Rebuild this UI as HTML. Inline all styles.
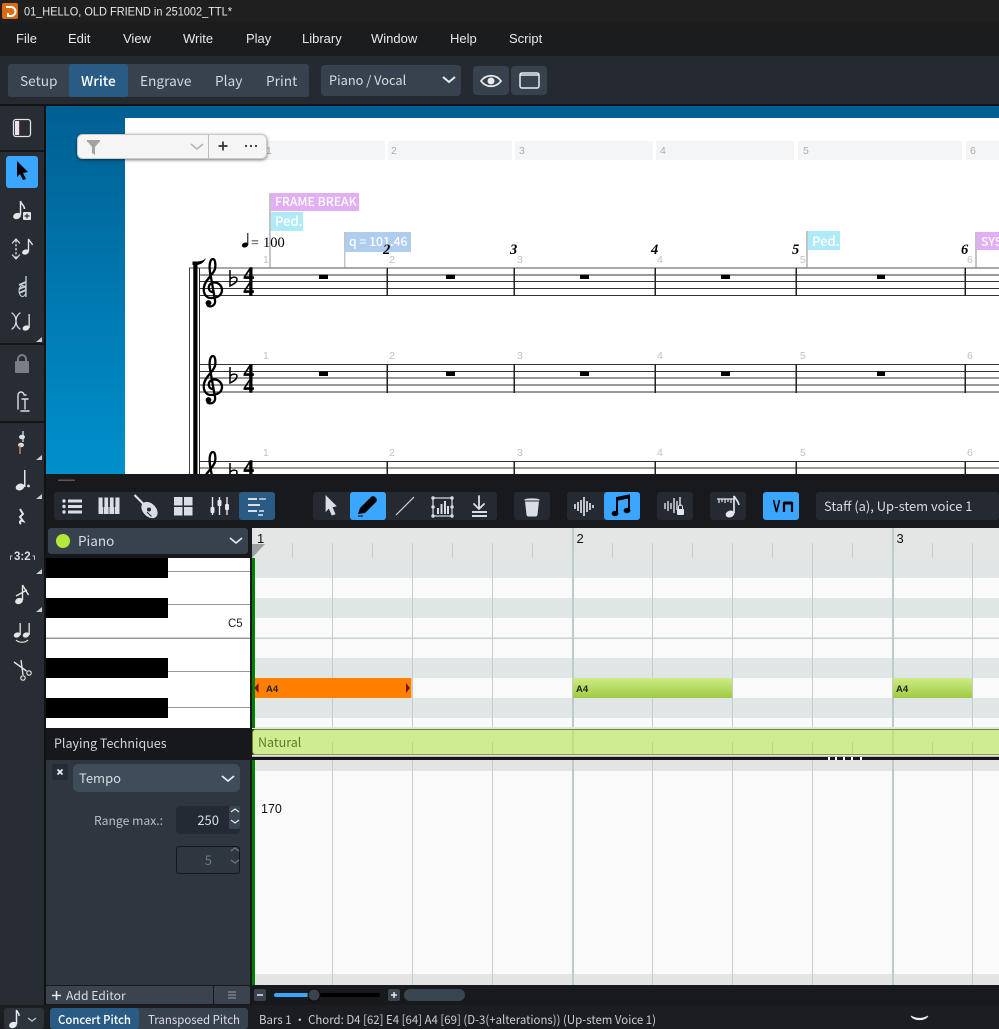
<!DOCTYPE html>
<html><head><meta charset="utf-8"><title>Dorico</title>
<style>
html,body{margin:0;padding:0;background:#17191c;width:999px;height:1029px;overflow:hidden}
svg{display:block;position:absolute;left:0;top:0}
text{font-family:"Noto Sans CJK SC","Liberation Sans",sans-serif;fill:#d8dde2;font-size:14px}
.m{font-family:"Liberation Sans",sans-serif;font-size:13px;fill:#e8e8e8}
.t{font-size:13.7px;fill:#d2d8de}
.n{font-size:10.5px;fill:#b8c3d2;font-family:"Liberation Sans",sans-serif}
.r{font-size:10.5px;fill:#a9adb3;font-family:"Liberation Sans",sans-serif}
.b{font-family:"Liberation Serif",serif;font-weight:bold;font-style:italic;font-size:14.5px;fill:#000}
.tag{font-size:12.2px;fill:#fff;font-weight:500}
.ts{font-family:"Liberation Serif",serif;font-weight:bold;font-size:21px;fill:#000;stroke:#000;stroke-width:.5px}
.ic{fill:none;stroke:#d9dee4;stroke-width:1.6;stroke-linecap:round;stroke-linejoin:round}
.f{fill:#d9dee4}
.note{font-family:"Liberation Sans",sans-serif;font-weight:bold;font-size:9.5px;fill:#222}
</style></head><body>
<svg width="999" height="1029" viewBox="0 0 999 1029" xmlns="http://www.w3.org/2000/svg">
<defs>
<linearGradient id="blue" x1="0" y1="0" x2="0" y2="1"><stop offset="0" stop-color="#005f92"/><stop offset="1" stop-color="#0090cc"/></linearGradient>
<linearGradient id="gn" x1="0" y1="0" x2="0" y2="1"><stop offset="0" stop-color="#cdea84"/><stop offset="1" stop-color="#9fcb42"/></linearGradient>
<filter id="sh" x="-10%" y="-30%" width="120%" height="170%"><feDropShadow dx="0" dy="1" stdDeviation="1.6" flood-color="#000" flood-opacity=".55"/></filter>
<g id="clef"><path d="M213 292C208 292 207 285 212 283C218 281 222 286 222 290C222 296 216 298 211 298C205 298 203 292 204 287C205 280 213 275 215 269C216 264 215 259 213 259C210 259 209 265 210 272L215 300C216 306 210 308 207 305" fill="none" stroke="#000" stroke-width="2.300"/><circle cx="208.500" cy="303" r="2.900"/></g>
<g id="sys">
<use href="#clef"/>
<path d="M230 270v16c3-1.500 7-3.500 7-6.500c0-3-4-3-7-.5" fill="none" stroke="#000" stroke-width="1.500"/>
<text class="ts" x="243.500" y="281.500">4</text><text class="ts" x="243.500" y="295.500">4</text>
</g>
</defs>

<!-- title + menu -->
<rect width="999" height="22" fill="#1f1f1f"/>
<rect y="22" width="999" height="34" fill="#1b1c1e"/>
<rect x="2" y="3" width="16" height="16" rx="2" fill="#d96c12"/>
<path d="M6 7h5a4 4 0 0 1 0 9H8v-3" fill="none" stroke="#fff" stroke-width="2"/>
<text class="m" x="24" y="15.500" style="font-size:12px" textLength="208" lengthAdjust="spacingAndGlyphs">01_HELLO, OLD FRIEND in 251002_TTL*</text>
<g class="menu">
<text class="m" x="16" y="43">File</text><text class="m" x="68" y="43">Edit</text><text class="m" x="123" y="43">View</text><text class="m" x="183" y="43">Write</text><text class="m" x="246" y="43">Play</text><text class="m" x="302" y="43">Library</text><text class="m" x="371" y="43">Window</text><text class="m" x="450" y="43">Help</text><text class="m" x="509" y="43">Script</text>
</g>

<!-- main toolbar -->
<rect y="56" width="999" height="48" fill="#252a31"/>
<rect y="104" width="999" height="2" fill="#121316"/>
<rect x="8" y="64" width="301" height="33" rx="3" fill="#38424e"/>
<rect x="69" y="64" width="59" height="33" rx="3" fill="#2a5b85"/>
<text class="t" x="20" y="86">Setup</text>
<text class="t" x="81" y="86" style="fill:#fff;font-weight:500">Write</text>
<text class="t" x="140" y="86">Engrave</text>
<text class="t" x="215" y="86">Play</text>
<text class="t" x="266" y="86">Print</text>
<rect x="321" y="65" width="140" height="31" rx="4" fill="#38424e"/>
<text x="329" y="85" style="font-size:12.800px;fill:#d8dde2">Piano / Vocal</text>
<path d="M443 77l6 5 6-5" fill="none" stroke="#e8ebee" stroke-width="2"/>
<rect x="473" y="66" width="36" height="29" rx="4" fill="#38424e"/>
<rect x="511" y="66" width="36" height="29" rx="4" fill="#38424e"/>
<path d="M481 81c5-7 15-7 20 0c-5 7-15 7-20 0z" fill="none" stroke="#e8ebee" stroke-width="1.700"/><circle cx="491" cy="81" r="3.500" fill="#e8ebee"/>
<rect x="520" y="73" width="19" height="15" rx="2" fill="none" stroke="#e8ebee" stroke-width="1.500"/><path d="M520 75h19" stroke="#e8ebee" stroke-width="1.500"/>

<!-- score area -->
<rect x="46" y="106" width="953" height="368" fill="url(#blue)"/>
<rect x="125" y="118" width="874" height="356" fill="#fff"/>
<!-- bar strip -->
<g fill="#f4f5f7"><rect x="262" y="141" width="123" height="19"/><rect x="388" y="141" width="124" height="19"/><rect x="515" y="141" width="138" height="19"/><rect x="656" y="141" width="138" height="19"/><rect x="798" y="141" width="164" height="19"/><rect x="966" y="141" width="33" height="19"/></g>
<g class="stripn"><text class="r" x="266" y="154">1</text><text class="r" x="391" y="154">2</text><text class="r" x="519" y="154">3</text><text class="r" x="660" y="154">4</text><text class="r" x="803" y="154">5</text><text class="r" x="970" y="154">6</text></g>

<!-- signposts -->
<g fill="#c4c4c4"><rect x="269" y="193" width="2" height="75"/><rect x="344" y="232" width="1.500" height="36"/><rect x="806" y="231" width="2" height="37"/><rect x="975" y="232" width="2" height="36"/></g>
<rect x="271" y="193" width="88" height="18" fill="#e2aef5"/><text class="tag" x="275" y="206">FRAME BREAK</text>
<rect x="271" y="212" width="32" height="19" fill="#aeeaf8"/><text class="tag" x="275" y="226" style="font-size:13px">Ped.</text>
<rect x="345.500" y="232" width="65.500" height="20" fill="#aecdef"/><text class="tag" x="349" y="246">q = 101.46</text>
<rect x="808" y="231" width="32" height="19" fill="#aeeaf8"/><text class="tag" x="812" y="246" style="font-size:13px">Ped.</text>
<rect x="977" y="232" width="22" height="18" fill="#e2aef5"/><text class="tag" x="981" y="246">SYS</text>

<!-- metronome -->
<ellipse cx="245" cy="245" rx="3.200" ry="2.400" transform="rotate(-20 245 245)" fill="#000"/><rect x="247.300" y="233" width="1" height="12" fill="#000"/>
<text x="251" y="247" style="font-family:'Liberation Serif',serif;font-size:14px;fill:#000">=</text>
<text x="263" y="247" style="font-family:'Liberation Serif',serif;font-size:14.500px;fill:#000">100</text>

<!-- staves -->
<g stroke="#333" stroke-width="1">
<path d="M199 275H999M199 281.500H999M199 288.500H999M199 295.500H999"/>
<path d="M199 364.500H999M199 371.500H999M199 378H999M199 385H999M199 392H999"/>
<path d="M199 461.500H999M199 468H999"/>
</g>
<path d="M189 268H999" stroke="#8c8c8c" stroke-width="1.500"/>
<g fill="#222"><rect x="386.500" y="268" width="1.500" height="28"/><rect x="513.500" y="268" width="1.500" height="28"/><rect x="654.500" y="268" width="1.500" height="28"/><rect x="795.500" y="268" width="1.500" height="28"/><rect x="964.500" y="268" width="1.500" height="28"/>
<rect x="386.500" y="364" width="1.500" height="29"/><rect x="513.500" y="364" width="1.500" height="29"/><rect x="654.500" y="364" width="1.500" height="29"/><rect x="795.500" y="364" width="1.500" height="29"/><rect x="964.500" y="364" width="1.500" height="29"/>
<rect x="386.500" y="461" width="1.500" height="14"/><rect x="513.500" y="461" width="1.500" height="14"/><rect x="654.500" y="461" width="1.500" height="14"/><rect x="795.500" y="461" width="1.500" height="14"/><rect x="964.500" y="461" width="1.500" height="14"/></g>
<g fill="#000"><rect x="319" y="274.500" width="9" height="4.500"/><rect x="446" y="274.500" width="9" height="4.500"/><rect x="580" y="274.500" width="9" height="4.500"/><rect x="721" y="274.500" width="9" height="4.500"/><rect x="877" y="274.500" width="8" height="4.500"/>
<rect x="319" y="371.500" width="9" height="4.500"/><rect x="446" y="371.500" width="9" height="4.500"/><rect x="580" y="371.500" width="9" height="4.500"/><rect x="721" y="371.500" width="9" height="4.500"/><rect x="877" y="371.500" width="8" height="4.500"/></g>
<!-- system brackets -->
<rect x="189" y="268" width="1" height="206" fill="#444"/><rect x="193.300" y="262" width="4.200" height="212" fill="#000"/><rect x="199" y="268" width="1" height="206" fill="#222"/>
<path d="M192.500 261.500h4c4 0 7-1 9.500-3.500c-1 3-4 6.500-9 7h-4.500z" fill="#000"/>
<use href="#sys"/>
<use href="#sys" y="97"/>
<use href="#sys" y="193"/>
<!-- numbers -->
<g><text class="b" x="383" y="254">2</text><text class="b" x="510" y="254">3</text><text class="b" x="651" y="254">4</text><text class="b" x="792" y="254">5</text><text class="b" x="961" y="254">6</text></g>
<g><text class="n" x="263" y="263">1</text><text class="n" x="389" y="263">2</text><text class="n" x="517" y="263">3</text><text class="n" x="657" y="263">4</text><text class="n" x="800" y="263">5</text><text class="n" x="967" y="263">6</text>
<text class="n" x="263" y="359">1</text><text class="n" x="389" y="359">2</text><text class="n" x="517" y="359">3</text><text class="n" x="657" y="359">4</text><text class="n" x="800" y="359">5</text><text class="n" x="967" y="359">6</text>
<text class="n" x="263" y="456">1</text><text class="n" x="389" y="456">2</text><text class="n" x="517" y="456">3</text><text class="n" x="657" y="456">4</text><text class="n" x="800" y="456">5</text><text class="n" x="967" y="456">6</text></g>

<!-- filter popover -->
<rect x="77.500" y="134.500" width="189" height="24" rx="5" fill="#f5f5f5" stroke="#c9c9c9" filter="url(#sh)"/>
<path d="M87 141h13l-5 6v8l-3-2v-6z" fill="#a3a3a3"/><path d="M87 141h13" stroke="#a3a3a3" stroke-width="2"/>
<path d="M191 144l6 5 6-5" fill="none" stroke="#b5b5b5" stroke-width="1.600"/>
<rect x="208" y="135" width="1" height="23" fill="#bbb"/>
<path d="M223 141.500v9M218.500 146h9" stroke="#333" stroke-width="1.700"/>
<circle cx="246" cy="146" r="1.100" fill="#333"/><circle cx="251" cy="146" r="1.100" fill="#333"/><circle cx="256" cy="146" r="1.100" fill="#333"/>

<!-- left toolbar -->
<rect x="0" y="106" width="44" height="923" fill="#282c33"/>
<rect x="44" y="106" width="2" height="923" fill="#111214"/>
<rect x="0" y="150" width="44" height="2" fill="#141518"/>
<rect x="0" y="343" width="44" height="2" fill="#141518"/>
<rect x="0" y="421" width="44" height="2" fill="#141518"/>
<rect x="13.500" y="119.500" width="17" height="17" rx="2.500" fill="none" stroke="#e0e3e6" stroke-width="1.300"/><rect x="15" y="121" width="4" height="14" fill="#e4e7ea"/><rect x="19" y="121" width="1" height="14" fill="#7a3a3a"/>
<rect x="6" y="156" width="32" height="32" rx="3" fill="#3aa6ff"/>
<path d="M17 161l11 11-5 1 3 6-3 1-3-6-3 3z" fill="#000"/>
<!-- note + -->
<ellipse cx="17" cy="216" rx="4" ry="3" fill="#e2e6ea" transform="rotate(-20 17 216)"/><path d="M20.500 215v-14c1 4 4 4 4 8" fill="none" stroke="#e2e6ea" stroke-width="1.500"/><rect x="23" y="212" width="8" height="8" rx="1" fill="#e2e6ea"/><path d="M27 213.500v5M24.500 216h5" stroke="#282c33" stroke-width="1.200"/>
<!-- arrows note -->
<path d="M16 240v18" stroke="#d9dee4" stroke-width="1.300" stroke-dasharray="2.500 1.500"/><path d="M12.500 243l3.500-4 3.500 4M12.500 255l3.500 4 3.500-4" class="ic" style="stroke-width:1.300"/>
<ellipse cx="25.500" cy="252" rx="3.500" ry="2.500" fill="#e2e6ea" transform="rotate(-20 25.500 252)"/><path d="M28.500 251v-12c1 3 3 3 4 6" fill="none" stroke="#e2e6ea" stroke-width="1.400"/>
<!-- tremolo -->
<path d="M26 276v21" stroke="#c9d2da" stroke-width="1.300"/><path d="M19 285l7-3M19 289l7-3M19 293l7-3" stroke="#c9d2da" stroke-width="1.800"/><ellipse cx="22.500" cy="291" rx="3.500" ry="5.500" fill="none" stroke="#c9d2da"/>
<!-- stem ties -->
<path d="M12 313c3 2 4 5 4 8c0 3-1 6-4 8M20 313c-3 2-4 5-4 8c0 3 1 6 4 8" class="ic" style="stroke-width:1.300"/>
<ellipse cx="26" cy="328" rx="3.500" ry="2.500" fill="#e2e6ea" transform="rotate(-20 26 328)"/><rect x="28.500" y="314" width="1.300" height="14" fill="#e2e6ea"/>
<path d="M36 343l6-5v5z" fill="#c8ccd0" transform="translate(0 -1)"/>
<!-- lock -->
<rect x="15" y="361" width="14" height="12" rx="1" fill="#7b7f85"/><path d="M18 361v-2a4 4 0 0 1 8 0v2" fill="none" stroke="#7b7f85" stroke-width="2"/>
<!-- caret -->
<path d="M18 400v-5a3 3 0 0 1 6 0h2M18 400v9M22 399h6M25 399v10M21 411h8" class="ic" style="stroke-width:1.400"/>
<!-- rests/notes -->
<path d="M23 431v11" stroke="#d9dee4" stroke-width="1.300"/><ellipse cx="22" cy="437" rx="3" ry="2.300" fill="#d9dee4"/><ellipse cx="21" cy="445" rx="3" ry="2.300" fill="#d9dee4"/><path d="M20 445v9" stroke="#d8955a" stroke-width="1.300"/>
<path d="M36 460l6-5v5zM36 499l6-5v5zM36 574l6-5v5zM36 612l6-5v5z" fill="#c8ccd0"/>
<ellipse cx="20" cy="487" rx="4.500" ry="3.300" fill="#e2e6ea" transform="rotate(-20 20 487)"/><rect x="24" y="470" width="1.500" height="17" fill="#e2e6ea"/><circle cx="28.500" cy="486" r="1.400" fill="#e2e6ea"/>
<path d="M20 509l3 5-3 3 3 4c-3-1-4 1-2 3" fill="none" stroke="#dbe2e8" stroke-width="2"/>
<text x="14" y="560" style="font-family:'Liberation Sans',sans-serif;font-size:11.500px;font-weight:bold;fill:#d9dee4">3:2</text><path d="M10.500 560v-4h2M34.500 560v-4h-2" stroke="#b9c0c6" fill="none"/>
<ellipse cx="19" cy="601" rx="4" ry="3" fill="#e2e6ea" transform="rotate(-20 19 601)"/><path d="M22.500 600v-15M16 596l11-6M22.500 585l6 10" fill="none" stroke="#e2e6ea" stroke-width="1.400"/>
<ellipse cx="17" cy="635" rx="3.300" ry="2.500" fill="#e2e6ea" transform="rotate(-20 17 635)"/><rect x="19.500" y="623" width="1.300" height="12" fill="#e2e6ea"/><ellipse cx="26" cy="635" rx="3.300" ry="2.500" fill="#e2e6ea" transform="rotate(-20 26 635)"/><rect x="28.500" y="623" width="1.300" height="12" fill="#e2e6ea"/><path d="M16 640c3 3 9 3 12 0" fill="none" stroke="#e2e6ea" stroke-width="1.200"/>
<path d="M14 662L26.500 671M21 660L23 675" fill="none" stroke="#dfe3e7" stroke-width="1.400"/><circle cx="29" cy="673" r="2.200" fill="none" stroke="#dfe3e7" stroke-width="1.200"/><circle cx="23" cy="678" r="2.200" fill="none" stroke="#dfe3e7" stroke-width="1.200"/>

<!-- lower zone header -->
<rect x="46" y="474" width="953" height="54" fill="#17191c"/>
<rect x="58" y="479.500" width="17" height="1.500" fill="#55585c"/>
<rect x="54" y="492" width="221" height="28" rx="3" fill="#252a32"/>
<rect x="239" y="492" width="36" height="28" rx="3" fill="#2a5b85"/>
<rect x="313" y="492" width="184" height="28" rx="3" fill="#252a32"/>
<rect x="350" y="492" width="36" height="28" rx="3" fill="#3aa6ff"/>
<rect x="514" y="492" width="36" height="28" rx="3" fill="#252a32"/>
<rect x="567" y="492" width="73" height="28" rx="3" fill="#252a32"/>
<rect x="604" y="492" width="36" height="28" rx="3" fill="#3aa6ff"/>
<rect x="657" y="492" width="36" height="28" rx="3" fill="#252a32"/>
<rect x="710" y="492" width="36" height="28" rx="3" fill="#252a32"/>
<rect x="763" y="492" width="36" height="28" rx="3" fill="#3aa6ff"/>
<rect x="816" y="492" width="183" height="28" rx="3" fill="#252a32"/>
<text x="824" y="511" style="font-size:12.900px;fill:#d8dde2">Staff (a), Up-stem voice 1</text>
<!-- list -->
<g class="f"><circle cx="64" cy="501" r="1.700"/><circle cx="64" cy="506.500" r="1.700"/><circle cx="64" cy="512" r="1.700"/><rect x="68" y="499.500" width="14" height="3"/><rect x="68" y="505" width="14" height="3"/><rect x="68" y="510.500" width="14" height="3"/></g>
<!-- keys -->
<rect x="98.500" y="497.500" width="21" height="16.500" class="f"/>
<path d="M103.500 497v10M109 497v10M114.500 497v10" stroke="#252a32" stroke-width="1.800"/><path d="M103.500 507v7M109 507v7M114.500 507v7" stroke="#252a32" stroke-width=".7"/>
<!-- guitar -->
<path d="M134.500 495L144 504.500" stroke="#e2e6ea" stroke-width="2"/>
<ellipse cx="149.500" cy="510" rx="9.500" ry="6.500" transform="rotate(45 149.500 510)" class="f"/><circle cx="149" cy="509.500" r="2" fill="#252a32"/><path d="M147 512l4.500 4.500" stroke="#252a32"/>
<!-- grid -->
<g class="f"><rect x="174" y="497" width="8.500" height="8.500"/><rect x="184" y="497" width="8.500" height="8.500"/><rect x="174" y="507" width="8.500" height="8.500"/><rect x="184" y="507" width="8.500" height="8.500"/></g>
<!-- mixer -->
<path d="M212.500 497v18M219.500 497v18M227 497v18" stroke="#e2e6ea" stroke-width="1.400"/><rect x="210.500" y="507" width="4" height="6" rx="1" fill="#e2e6ea"/><rect x="217.500" y="500" width="4" height="6" rx="1" fill="#e2e6ea"/><rect x="225" y="504" width="4" height="6" rx="1" fill="#e2e6ea"/>
<!-- roll -->
<g class="f"><rect x="248" y="498" width="9" height="2"/><rect x="248" y="504" width="12" height="2"/><rect x="248" y="510" width="9" height="2"/><rect x="259" y="498" width="7" height="2" opacity=".7"/><rect x="259" y="510" width="5" height="2" opacity=".8"/><rect x="258" y="514" width="5" height="2" opacity=".8"/></g>
<!-- select -->
<path d="M326 496l10 10-4 1 3 7-3 1-3-7-3 3z" class="f" stroke="#d9dee4" stroke-width=".8"/>
<!-- pencil -->
<path d="M358 514l2-6 11-11c1-1 3-1 4 0l1 1c1 1 1 3 0 4l-11 11z" fill="#000"/><path d="M358 516h5" stroke="#000"/>
<path d="M396 515l18-18" stroke="#cfd4d9" stroke-width="1.200"/>
<!-- range -->
<rect x="433" y="498" width="19" height="18" fill="none" stroke="#d9dee4" stroke-width="1.200"/><g class="f"><circle cx="433" cy="498" r="1.700"/><circle cx="452" cy="498" r="1.700"/><circle cx="433" cy="516" r="1.700"/><circle cx="452" cy="516" r="1.700"/><circle cx="433" cy="507" r="1.700"/><circle cx="452" cy="507" r="1.700"/><rect x="437" y="508" width="2" height="6"/><rect x="440.500" y="504" width="2" height="10"/><rect x="444" y="501" width="2" height="13"/><rect x="447" y="506" width="2" height="8"/></g>
<!-- down -->
<path d="M479 496v12M474 504l5 5 5-5" class="ic" style="stroke-width:1.800"/><rect x="472" y="511" width="15" height="2" class="f"/><rect x="472" y="515" width="15" height="2" class="f"/>
<!-- trash -->
<path d="M525 501.500h14l-1.500 13c-.2 1.500-1 2-2 2h-7c-1 0-1.800-.5-2-2z" class="f"/><path d="M524.500 499.500c2-1.500 13-1.500 15 0v1h-15z" class="f"/>
<!-- wave -->
<path d="M575 504v5M578 502v9M581 500v13M584 497v19M587 501v11M590 503v7M593 505v3" stroke="#d9dee4" stroke-width="1.700"/>
<!-- notes blue -->
<path d="M617 498l12-2.500v15" fill="none" stroke="#000" stroke-width="2"/><path d="M617 497v16" stroke="#000" stroke-width="2"/><path d="M617 499l12-2.500" stroke="#000" stroke-width="3.500"/><ellipse cx="615" cy="513.500" rx="3.400" ry="2.700" fill="#000"/><ellipse cx="627" cy="510.500" rx="3.400" ry="2.700" fill="#000"/>
<!-- wave lock -->
<path d="M665 503v6M668 501v10M671 503v6M674 498v15M677 501v9M680 497v9" stroke="#cfd6dc" stroke-width="1.500"/><rect x="677" y="509" width="7" height="6" rx="1" fill="#e2e6ea"/><path d="M678.500 509v-2a2 2 0 0 1 4 0v2" fill="none" stroke="#e2e6ea"/>
<!-- ruler note -->
<path d="M717 499h16M719 499v4M722 499v3M725 499v4M728 499v3M731 499v4" stroke="#e2e6ea" stroke-width="1.200" fill="none"/>
<ellipse cx="730" cy="514" rx="4.500" ry="3.300" fill="#e2e6ea" transform="rotate(-20 730 514)"/><path d="M734 513v-17c2 4 4 4 5 9" fill="none" stroke="#e2e6ea" stroke-width="1.700"/>
<!-- down-up bow -->
<path d="M773.500 500l3 12 3-12" fill="none" stroke="#000" stroke-width="1.600"/><path d="M784 512v-9h8v9" fill="none" stroke="#000" stroke-width="2.200"/><path d="M784 503h8" stroke="#000" stroke-width="3"/>

<!-- Piano dropdown -->
<rect x="48" y="528" width="200" height="26" rx="3" fill="#38424e"/>
<circle cx="63" cy="541" r="7" fill="#b2e83a"/>
<text x="78" y="546" style="font-size:13.500px;fill:#d8dde2">Piano</text>
<path d="M230 538l6 5 6-5" fill="none" stroke="#e8ebee" stroke-width="1.600"/>

<!-- piano keyboard -->
<rect x="46" y="558" width="204" height="170" fill="#fff"/>
<g fill="#000"><rect x="46" y="558" width="122" height="20"/><rect x="46" y="598" width="122" height="20"/><rect x="46" y="658" width="122" height="20"/><rect x="46" y="698" width="122" height="20"/></g>
<g fill="#999"><rect x="168" y="571" width="82" height="1"/><rect x="168" y="604" width="82" height="1"/><rect x="46" y="637.500" width="204" height="1.500"/><rect x="168" y="671" width="82" height="1"/><rect x="168" y="707" width="82" height="1"/></g>
<text x="228" y="627" style="font-family:'Liberation Sans',sans-serif;font-size:11.500px;fill:#222">C5</text>
<rect x="250" y="528" width="2" height="232" fill="#17191c"/>

<!-- ruler -->
<rect x="252" y="528" width="747" height="30" fill="#e4e5e5"/>
<!-- rows -->
<rect x="252" y="558" width="747" height="170" fill="#fafafa"/>
<g fill="#e0e5e5"><rect x="252" y="558" width="747" height="20"/><rect x="252" y="598" width="747" height="20"/><rect x="252" y="658" width="747" height="20"/><rect x="252" y="698" width="747" height="20"/></g>
<rect x="252" y="637.500" width="747" height="1.500" fill="#ccd2d2"/>
<rect x="252" y="727" width="747" height="2" fill="#e4e5e5"/>
<!-- tempo lane -->
<rect x="252" y="760" width="747" height="225" fill="#fafafa"/>
<rect x="252" y="760" width="747" height="11" fill="#e4e4e4"/>
<rect x="252" y="974" width="747" height="11" fill="#e4e4e4"/>
<!-- grid -->
<g stroke="#c3cdcd" stroke-width="1"><path d="M332.500 558V727M412.500 558V727M492.500 558V727M652.500 558V727M732.500 558V727M812.500 558V727M972.500 558V727"/>
<path d="M332.500 760V985M412.500 760V985M492.500 760V985M652.500 760V985M732.500 760V985M812.500 760V985M972.500 760V985"/>
<path d="M292.500 543V558M332.500 543V558M372.500 543V558M412.500 543V558M452.500 543V558M492.500 543V558M532.500 543V558M612.500 543V558M652.500 543V558M692.500 543V558M732.500 543V558M772.500 543V558M812.500 543V558M852.500 543V558M932.500 543V558M972.500 543V558"/></g>
<g stroke="#bccaca" stroke-width="2"><path d="M573 528V727M893 528V727M573 760V985M893 760V985"/></g>
<text x="257" y="543" style="font-family:'Liberation Sans',sans-serif;font-size:13px;fill:#111">1</text>
<text x="576.500" y="543" style="font-family:'Liberation Sans',sans-serif;font-size:13px;fill:#111">2</text>
<text x="896.500" y="543" style="font-family:'Liberation Sans',sans-serif;font-size:13px;fill:#111">3</text>
<path d="M252 558v-14h13z" fill="#9ba0a0"/>
<rect x="252" y="558" width="3" height="170" fill="#008000"/>
<rect x="252" y="760" width="3" height="225" fill="#008000"/>
<text x="261" y="813" style="font-family:'Liberation Sans',sans-serif;font-size:12.500px;fill:#111">170</text>
<!-- notes -->
<rect x="255" y="678" width="156.500" height="20" fill="#ff8000"/>
<path d="M254.500 688l4-5v10z" fill="#7a1010"/><path d="M410 688l-4-5v10z" fill="#7a1010"/>
<text class="note" x="266" y="692">A4</text>
<rect x="573" y="678" width="159" height="20" fill="url(#gn)"/><text class="note" x="576" y="692">A4</text>
<rect x="893" y="678" width="79" height="20" fill="url(#gn)"/><text class="note" x="896" y="692">A4</text>

<!-- Playing techniques -->
<rect x="46" y="728" width="206" height="32" fill="#16181b"/>
<text x="54" y="748" style="font-size:12.500px;fill:#d2d8de">Playing Techniques</text>
<rect x="252.500" y="729.500" width="760" height="25" rx="3" fill="#cfec90" stroke="#6b8a2c"/>
<rect x="252" y="756.500" width="747" height="3.500" fill="#161616"/>
<rect x="252" y="754.800" width="747" height="2" fill="#e8e8e8"/>
<g stroke="#b5d880" stroke-width="1"><path d="M332.500 742V754M412.500 742V754M492.500 742V754M652.500 742V754M732.500 742V754M772.500 742V754M812.500 742V754M852.500 742V754M932.500 742V754M972.500 742V754"/></g>
<path d="M573 730V754M893 730V754" stroke="#bcdc8a" stroke-width="2"/>
<text x="258" y="747" style="font-size:12.500px;fill:#5f7a2a">Natural</text>
<g fill="#fff"><rect x="828" y="757" width="2" height="3"/><rect x="835" y="757" width="2" height="3"/><rect x="843" y="757" width="2" height="3"/><rect x="851" y="757" width="2" height="3"/><rect x="860" y="757" width="2" height="3"/></g>

<!-- tempo panel -->
<rect x="46" y="760" width="204" height="225" fill="#2e3740"/>
<rect x="250" y="760" width="2" height="225" fill="#17191c"/>
<rect x="52" y="764" width="16" height="16" rx="3" fill="#252c34"/>
<path d="M57.500 769.500l5 5M62.500 769.500l-5 5" stroke="#e8ebee" stroke-width="1.800"/>
<rect x="73" y="764" width="167" height="28" rx="5" fill="#3f4c59"/>
<text x="79" y="783" style="font-size:13px;fill:#d8dde2">Tempo</text>
<path d="M222 776l6 5 6-5" fill="none" stroke="#e8ebee" stroke-width="1.700"/>
<text x="163" y="825" text-anchor="end" style="font-size:12.200px;fill:#b9c0c6">Range max.:</text>
<rect x="176" y="806" width="64" height="28" rx="4" fill="#232a33"/>
<rect x="229" y="806" width="11" height="23" rx="2" fill="#3a4550"/>
<text x="219" y="825" text-anchor="end" style="font-size:13px;fill:#d8dde2">250</text>
<path d="M231 812l4-3 4 3M231 820l4 3 4-3" fill="none" stroke="#dfe3e7" stroke-width="1.200"/>
<rect x="176.500" y="846.500" width="63" height="27" rx="3" fill="#2e3740" stroke="#14171a"/>
<text x="212" y="865" text-anchor="end" style="font-size:13px;fill:#6f7880">5</text>
<path d="M231 851l4-3 4 3M231 860l4 3 4-3" fill="none" stroke="#6f7880" stroke-width="1.200"/>

<!-- footer row -->
<rect x="46" y="985" width="953" height="20" fill="#17191c"/>
<rect x="46" y="986" width="167" height="18" rx="1" fill="#3a434e"/>
<rect x="214" y="986" width="36" height="18" rx="1" fill="#3a434e"/>
<path d="M52 995.500h9M56.500 991v9" stroke="#e8ebee" stroke-width="1.500"/>
<text x="66" y="1000" style="font-size:12.200px;fill:#d8dde2">Add Editor</text>
<path d="M228 992h8M228 995h8M228 998h8" stroke="#9aa2aa"/>
<rect x="254" y="989" width="12" height="12" rx="2" fill="#3a434e"/><path d="M257 995h6" stroke="#e8ebee" stroke-width="1.500"/>
<rect x="274" y="993" width="106" height="4" rx="2" fill="#000"/><rect x="274" y="993" width="36" height="4" rx="2" fill="#3aa6ff"/>
<circle cx="314" cy="995" r="6" fill="#3a434e" stroke="#0c0d0f" stroke-width="1"/>
<rect x="388" y="989" width="12" height="12" rx="2" fill="#3a434e"/><path d="M391 995h6M394 992v6" stroke="#e8ebee" stroke-width="1.500"/>
<rect x="404" y="989" width="61" height="12" rx="6" fill="#3a4552"/>

<!-- status bar -->
<rect x="46" y="1005" width="953" height="24" fill="#1b1d20"/>
<rect x="0" y="1005" width="46" height="24" fill="#1b1d20"/>
<rect x="4" y="1008" width="40" height="21" rx="3" fill="#2d333b"/>
<ellipse cx="13" cy="1025" rx="4" ry="3" fill="#e8ebee" transform="rotate(-20 13 1025)"/><path d="M16.500 1024v-14c1 3 3 3 2.500 6" fill="none" stroke="#e8ebee" stroke-width="1.500"/>
<path d="M28 1018l4 3 4-3" fill="none" stroke="#b9c0c6" stroke-width="1.300"/>
<rect x="50" y="1008" width="198" height="21" rx="3" fill="#38424e"/>
<rect x="50" y="1008" width="89" height="21" rx="3" fill="#2a5b85"/>
<text x="58" y="1024" style="font-size:12px;fill:#fff;font-weight:500" textLength="73" lengthAdjust="spacingAndGlyphs">Concert Pitch</text>
<text x="148" y="1024" style="font-size:12px;fill:#d8dde2" textLength="92" lengthAdjust="spacingAndGlyphs">Transposed Pitch</text>
<text x="259" y="1024" style="font-size:12px;fill:#c9ced3" textLength="397" lengthAdjust="spacingAndGlyphs">Bars 1 · Chord: D4 [62] E4 [64] A4 [69] (D-3(+alterations)) (Up-stem Voice 1)</text>
<path d="M911 1016c5 3 12 3 17 0c-3 5-14 5-17 0z" fill="#e8ebee" stroke="#e8ebee" stroke-width=".8"/>
</svg>
</body></html>
